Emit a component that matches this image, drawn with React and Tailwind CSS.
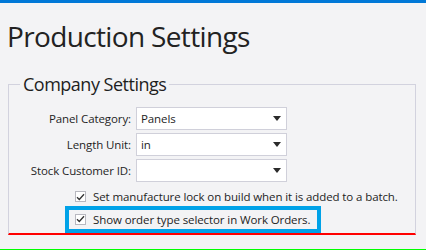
import { useState } from "react";

const fields = [
  { label: "Panel Category:", value: "Panels" },
  { label: "Length Unit:", value: "in" },
  { label: "Stock Customer ID:", value: "" },
];

function ComboBox({ value }) {
  return (
    <div className="flex h-[23px] w-[151px] items-center justify-between border border-[#d0d0da] bg-white pl-[4px] pr-[5px]">
      <span className="text-[11.5px] leading-none tracking-[-0.1px] text-[#1e1e1e]">{value}</span>
      <svg width="8" height="5" viewBox="0 0 8 5" aria-hidden="true">
        <path d="M0 0h8L4 5z" fill="#2b2b2b" />
      </svg>
    </div>
  );
}

function CheckRow({ label, checked }) {
  return (
    <label className="flex items-center gap-[7px] whitespace-nowrap">
      <span className="grid size-[11px] shrink-0 place-items-center border border-[#b8b8c0] bg-white">
        {checked && (
          <svg width="9" height="8" viewBox="0 0 9 8" aria-hidden="true">
            <path d="M1 4.2l2.3 2.3L8 1.2" fill="none" stroke="#333" strokeWidth="1.3" />
          </svg>
        )}
      </span>
      <span className="text-[11.5px] leading-none tracking-[-0.1px] text-[#1e1e1e]">{label}</span>
    </label>
  );
}

export default function App() {
  const [lock] = useState(true);
  const [orderType] = useState(true);

  return (
    <div className="flex h-[250px] w-[426px] flex-col border-t-[3px] border-b border-t-[#0078d7] border-b-[#00ff00] bg-[#f3f3f5] font-['Segoe_UI','Open_Sans',sans-serif] text-[#1e1e1e]">
      <h1 className="pl-[7px] pt-[15px] text-[28px] leading-[36px] tracking-[-0.65px] text-[#222]">Production Settings</h1>

      <section className="mx-[8px] mt-[17px] w-[408px]">
        <div className="flex h-[26px]">
          <span className="h-[13px] w-[12px] self-end border-l border-t border-[#d2d2de]" />
          <h2 className="px-[3px] text-[18px] leading-[26px] tracking-[-0.5px] text-[#1e1e1e]">Company Settings</h2>
          <span className="h-[13px] flex-1 self-end border-r border-t border-[#d2d2de]" />
        </div>

        <div className="h-[138px] border-x border-b-2 border-x-[#d2d2de] border-b-[#ff0000] pl-[1px] pt-[10px]">
          <div className="flex flex-col gap-[3px]">
            {fields.map((f) => (
              <div key={f.label} className="flex items-center gap-[5px]">
                <span className="w-[121px] text-right text-[11.5px] leading-none tracking-[-0.1px] text-[#1e1e1e]">{f.label}</span>
                <ComboBox value={f.value} />
              </div>
            ))}
          </div>

          <div className="mt-[9px] flex flex-col gap-[11px] pl-[65px]">
            <CheckRow label="Set manufacture lock on build when it is added to a batch." checked={lock} />
            <div className="relative">
              <CheckRow label="Show order type selector in Work Orders." checked={orderType} />
              <span className="pointer-events-none absolute -left-[10px] -top-[8px] h-[27px] w-[256px] border-[4px] border-[#00a2e8]" />
            </div>
          </div>
        </div>
      </section>
    </div>
  );
}
